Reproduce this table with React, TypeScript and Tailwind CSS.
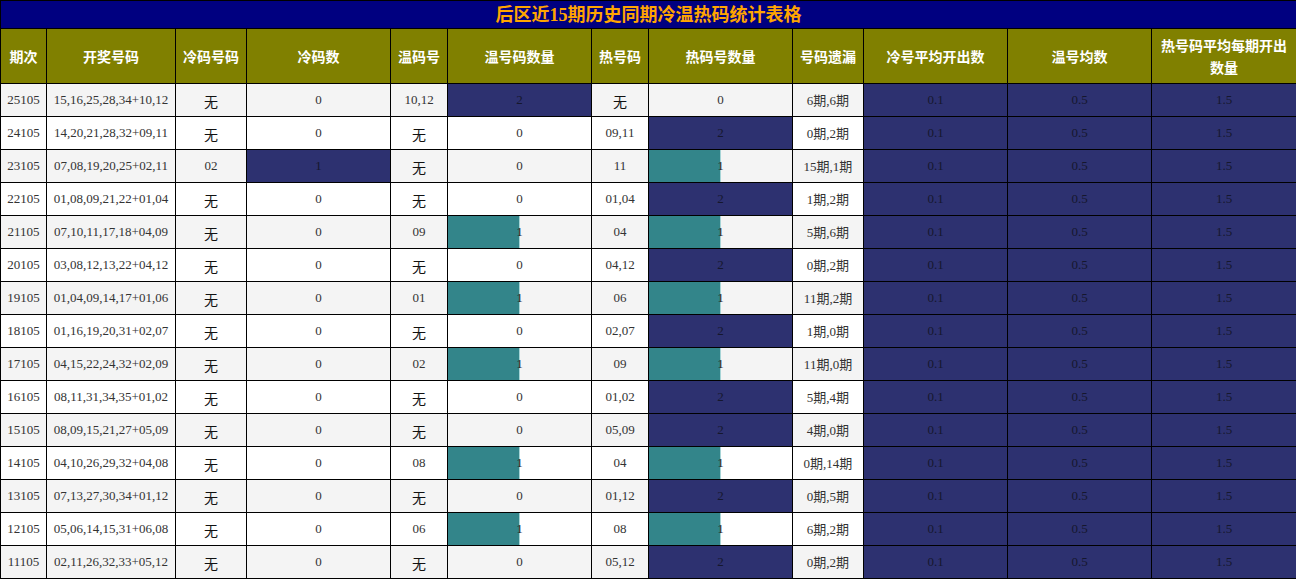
type Row = {
  period: string
  draw: string
  cold: string
  coldCount: number
  warm: string
  warmCount: number
  hot: string
  hotCount: number
  miss: string
}

const rows: Row[] = [
  { period: "25105", draw: "15,16,25,28,34+10,12", cold: "无", coldCount: 0, warm: "10,12", warmCount: 2, hot: "无", hotCount: 0, miss: "6期,6期" },
  { period: "24105", draw: "14,20,21,28,32+09,11", cold: "无", coldCount: 0, warm: "无", warmCount: 0, hot: "09,11", hotCount: 2, miss: "0期,2期" },
  { period: "23105", draw: "07,08,19,20,25+02,11", cold: "02", coldCount: 1, warm: "无", warmCount: 0, hot: "11", hotCount: 1, miss: "15期,1期" },
  { period: "22105", draw: "01,08,09,21,22+01,04", cold: "无", coldCount: 0, warm: "无", warmCount: 0, hot: "01,04", hotCount: 2, miss: "1期,2期" },
  { period: "21105", draw: "07,10,11,17,18+04,09", cold: "无", coldCount: 0, warm: "09", warmCount: 1, hot: "04", hotCount: 1, miss: "5期,6期" },
  { period: "20105", draw: "03,08,12,13,22+04,12", cold: "无", coldCount: 0, warm: "无", warmCount: 0, hot: "04,12", hotCount: 2, miss: "0期,2期" },
  { period: "19105", draw: "01,04,09,14,17+01,06", cold: "无", coldCount: 0, warm: "01", warmCount: 1, hot: "06", hotCount: 1, miss: "11期,2期" },
  { period: "18105", draw: "01,16,19,20,31+02,07", cold: "无", coldCount: 0, warm: "无", warmCount: 0, hot: "02,07", hotCount: 2, miss: "1期,0期" },
  { period: "17105", draw: "04,15,22,24,32+02,09", cold: "无", coldCount: 0, warm: "02", warmCount: 1, hot: "09", hotCount: 1, miss: "11期,0期" },
  { period: "16105", draw: "08,11,31,34,35+01,02", cold: "无", coldCount: 0, warm: "无", warmCount: 0, hot: "01,02", hotCount: 2, miss: "5期,4期" },
  { period: "15105", draw: "08,09,15,21,27+05,09", cold: "无", coldCount: 0, warm: "无", warmCount: 0, hot: "05,09", hotCount: 2, miss: "4期,0期" },
  { period: "14105", draw: "04,10,26,29,32+04,08", cold: "无", coldCount: 0, warm: "08", warmCount: 1, hot: "04", hotCount: 1, miss: "0期,14期" },
  { period: "13105", draw: "07,13,27,30,34+01,12", cold: "无", coldCount: 0, warm: "无", warmCount: 0, hot: "01,12", hotCount: 2, miss: "0期,5期" },
  { period: "12105", draw: "05,06,14,15,31+06,08", cold: "无", coldCount: 0, warm: "06", warmCount: 1, hot: "08", hotCount: 1, miss: "6期,2期" },
  { period: "11105", draw: "02,11,26,32,33+05,12", cold: "无", coldCount: 0, warm: "无", warmCount: 0, hot: "05,12", hotCount: 2, miss: "0期,2期" },
]

const headers = [
  "期次",
  "开奖号码",
  "冷码号码",
  "冷码数",
  "温码号",
  "温号码数量",
  "热号码",
  "热码号数量",
  "号码遗漏",
  "冷号平均开出数",
  "温号均数",
  "热号码平均每期开出数量",
]

const widths = [46, 129, 71, 144, 57, 144, 57, 144, 71, 144, 144, 145]

const cell = "border border-black p-0 text-center align-middle h-[33px]"
const navy = "bg-[#2d3170] text-[#15172e]"

// full navy when the count hits the column max, otherwise a teal bar
const BarCell = ({ value, max }: { value: number; max: number }) => {
  if (value === 0) return <td className={cell}>0</td>
  if (value >= max) return <td className={`${cell} ${navy}`}>{value}</td>
  return (
    <td className={cell}>
      <div className="relative flex h-[32px] items-center justify-center">
        <div
          className="absolute left-0 top-0 h-full bg-[#33858a] border-r border-[#a6d4d6]"
          style={{ width: `${(value / max) * 100}%` }}
        />
        <span className="relative text-[#222]">{value}</span>
      </div>
    </td>
  )
}

const Word = ({ text }: { text: string }) =>
  text === "无" ? <span className="text-[14px] text-[#111] relative top-[2px]">无</span> : <>{text}</>

export default function App() {
  return (
    <div className="w-[1296px] bg-white">
      <table
        className="table-fixed border-collapse w-[1296px] text-[13px] text-[#333]"
        style={{ fontFamily: '"Liberation Serif", "Noto Sans CJK SC", serif' }}
      >
        <colgroup>
          {widths.map((w, i) => (
            <col key={i} style={{ width: w }} />
          ))}
        </colgroup>
        <tbody>
          <tr>
            <td
              colSpan={12}
              className="border border-black bg-[#000080] h-[28px] p-0 text-center text-[18px] font-bold text-[#ffa500] leading-none"
            >
              后区近15期历史同期冷温热码统计表格
            </td>
          </tr>
          <tr>
            {headers.map((h) => (
              <td
                key={h}
                className="border border-black bg-[#808000] h-[55px] px-1 text-center align-middle text-[14px] font-bold leading-[22px] text-white"
                style={{ fontFamily: '"Noto Sans CJK SC", sans-serif' }}
              >
                {h}
              </td>
            ))}
          </tr>
          {rows.map((r, i) => (
            <tr key={r.period} className={i % 2 === 0 ? "bg-[#f4f4f4]" : "bg-white"}>
              <td className={cell}>{r.period}</td>
              <td className={cell}>{r.draw}</td>
              <td className={cell}>
                <Word text={r.cold} />
              </td>
              <BarCell value={r.coldCount} max={1} />
              <td className={cell}>
                <Word text={r.warm} />
              </td>
              <BarCell value={r.warmCount} max={2} />
              <td className={cell}>
                <Word text={r.hot} />
              </td>
              <BarCell value={r.hotCount} max={2} />
              <td className={cell}>
                <span className="relative top-[1px]">{r.miss}</span>
              </td>
              <td className={`${cell} ${navy}`}>0.1</td>
              <td className={`${cell} ${navy}`}>0.5</td>
              <td className={`${cell} ${navy}`}>1.5</td>
            </tr>
          ))}
        </tbody>
      </table>
    </div>
  )
}
